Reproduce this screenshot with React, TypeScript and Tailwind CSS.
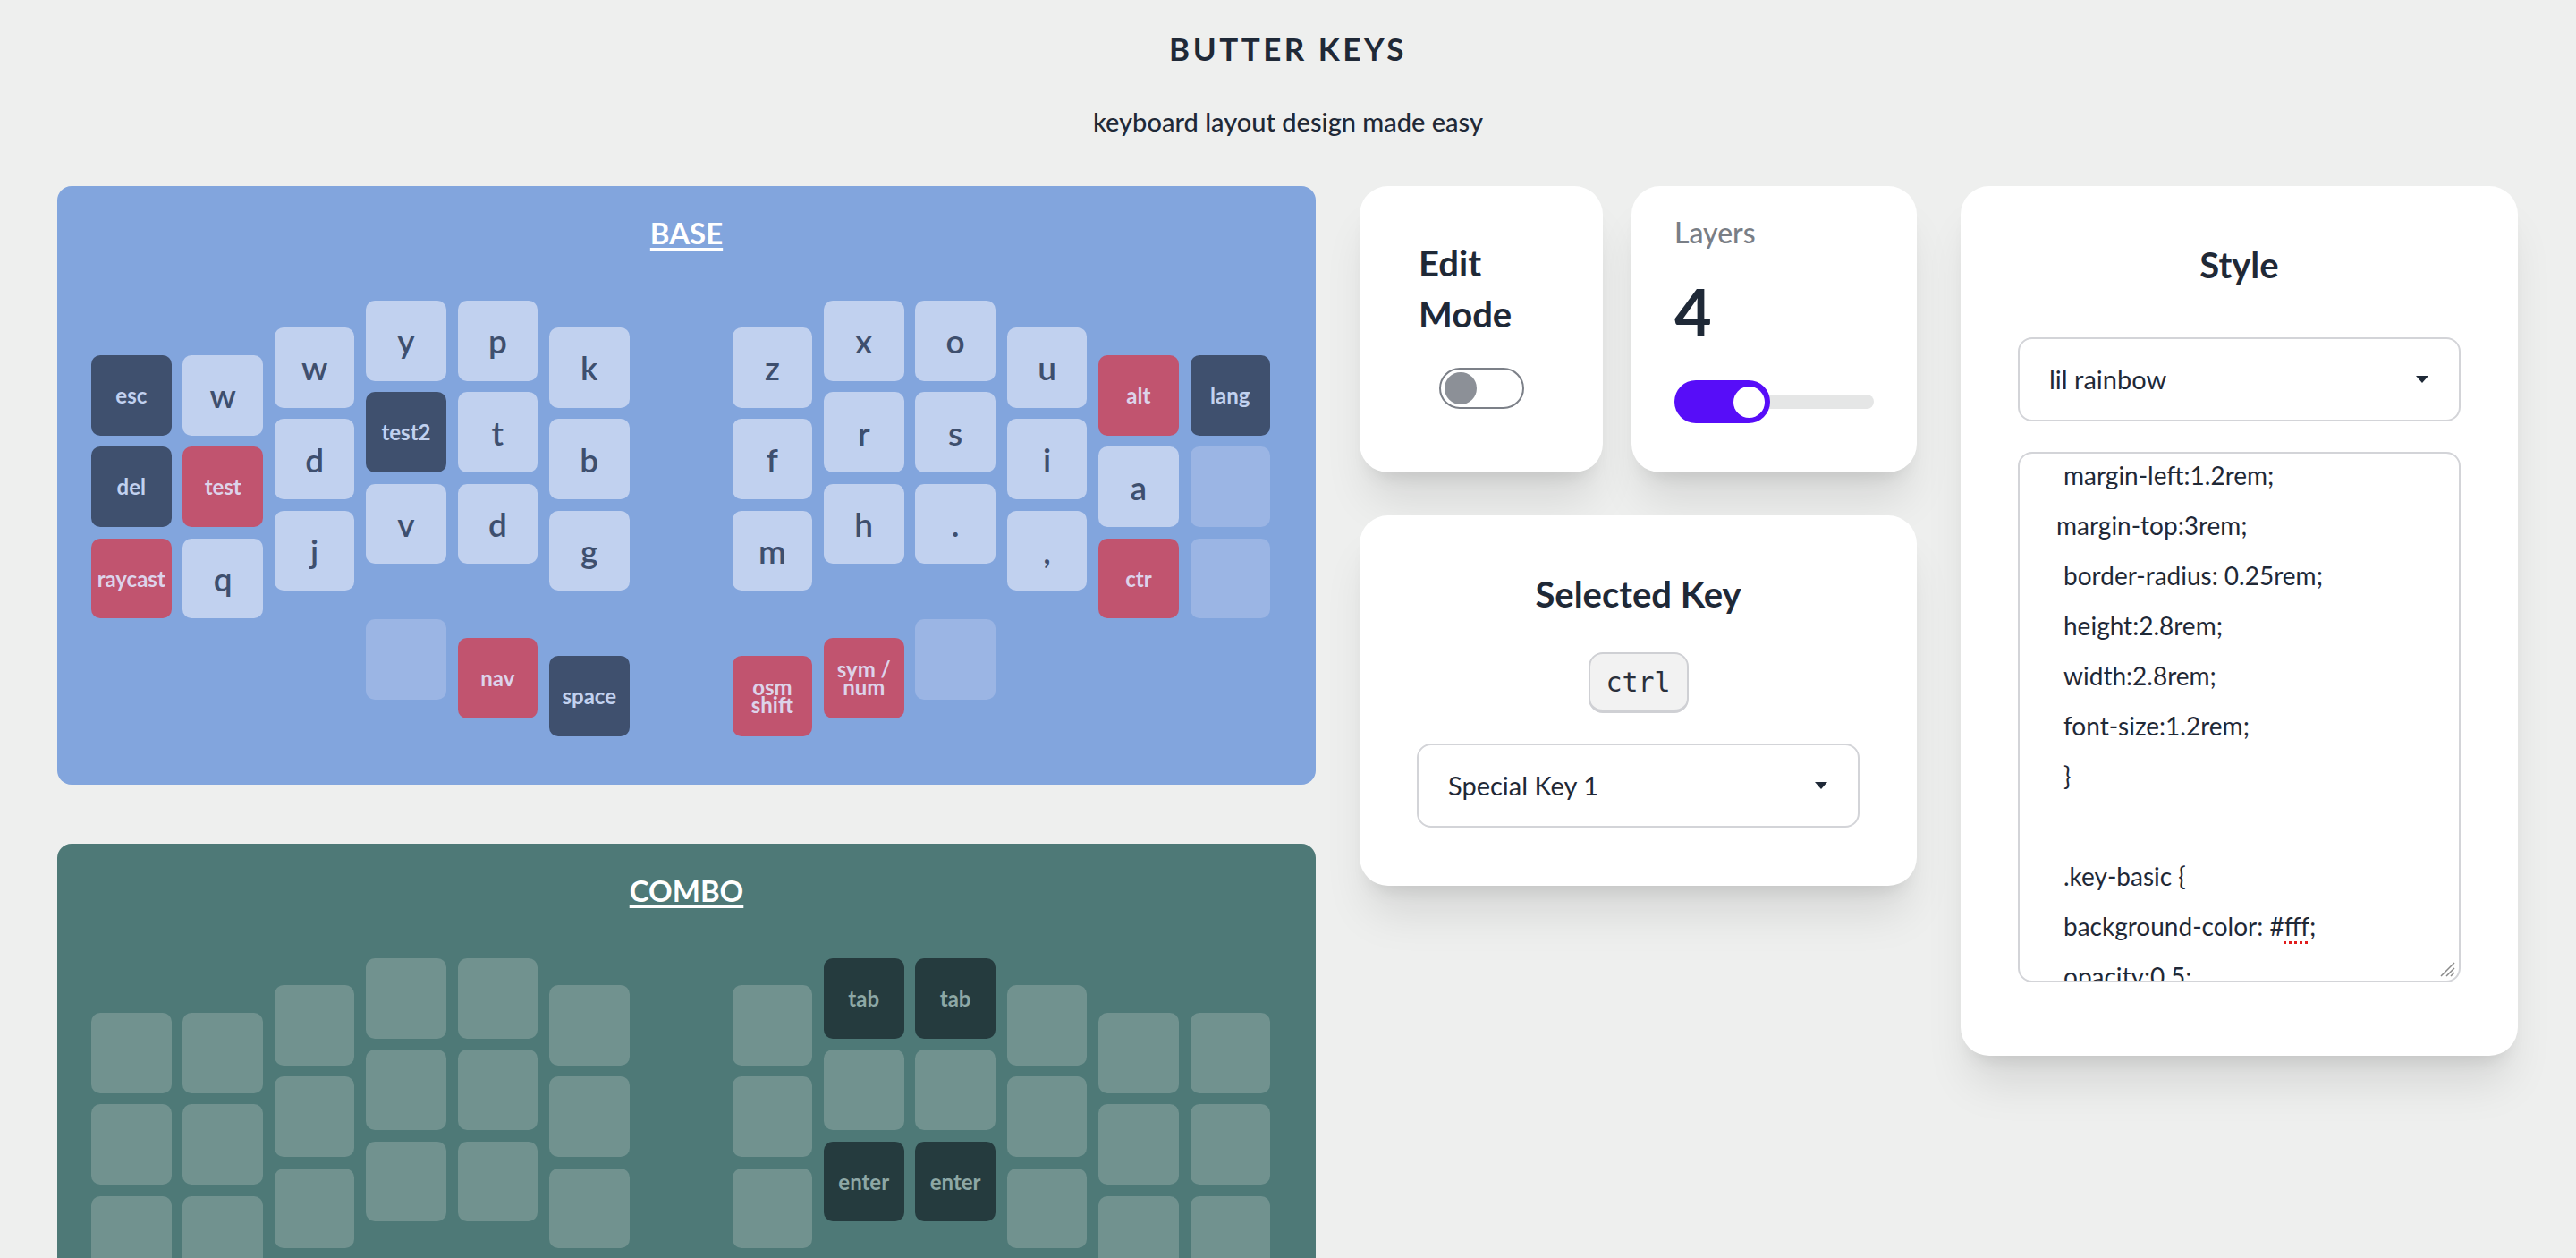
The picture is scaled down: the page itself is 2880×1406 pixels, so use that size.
import React from "react";

type Tone = "light" | "dark" | "red" | "blank";
type KeyDef = { label?: string; tone: Tone };
type Col = { offset: string; keys: KeyDef[] };
type Thumb = { offset: string; key: KeyDef } | null;

const baseTones: Record<Tone, string> = {
  light: "bg-[#c1d1ef] text-[#3e4f6e]",
  dark: "bg-[#3f506e] text-[#c1d1ef]",
  red: "bg-[#c1546f] text-[#ddd3ea]",
  blank: "bg-[#9bb5e4]",
};

const comboTones: Record<Tone, string> = {
  light: "bg-[#71928f] text-[#253b3e]",
  dark: "bg-[#253b3e] text-[#8ea8a5]",
  red: "bg-[#c1546f] text-[#ddd3ea]",
  blank: "bg-[#71928f]",
};

const k = (label: string, tone: Tone = "light"): KeyDef => ({ label, tone });
const blank: KeyDef = { tone: "blank" };

// base layer
const baseLeft: Col[] = [
  { offset: "mt-[61px]", keys: [k("esc", "dark"), k("del", "dark"), k("raycast", "red")] },
  { offset: "mt-[61px]", keys: [k("w"), k("test", "red"), k("q")] },
  { offset: "mt-[30px]", keys: [k("w"), k("d"), k("j")] },
  { offset: "mt-0", keys: [k("y"), k("test2", "dark"), k("v")] },
  { offset: "mt-0", keys: [k("p"), k("t"), k("d")] },
  { offset: "mt-[30px]", keys: [k("k"), k("b"), k("g")] },
];
const baseLeftThumbs: Thumb[] = [
  null,
  null,
  null,
  { offset: "mt-[1px]", key: blank },
  { offset: "mt-[22px]", key: k("nav", "red") },
  { offset: "mt-[42px]", key: k("space", "dark") },
];
const baseRight: Col[] = [
  { offset: "mt-[30px]", keys: [k("z"), k("f"), k("m")] },
  { offset: "mt-0", keys: [k("x"), k("r"), k("h")] },
  { offset: "mt-0", keys: [k("o"), k("s"), k(".")] },
  { offset: "mt-[30px]", keys: [k("u"), k("i"), k(",")] },
  { offset: "mt-[61px]", keys: [k("alt", "red"), k("a"), k("ctr", "red")] },
  { offset: "mt-[61px]", keys: [k("lang", "dark"), blank, blank] },
];
const baseRightThumbs: Thumb[] = [
  { offset: "mt-[42px]", key: k("osm shift", "red") },
  { offset: "mt-[22px]", key: k("sym / num", "red") },
  { offset: "mt-[1px]", key: blank },
  null,
  null,
  null,
];

// combo layer
const b3 = [blank, blank, blank];
const comboLeft: Col[] = baseLeft.map((c) => ({ offset: c.offset, keys: b3 }));
const comboLeftThumbs: Thumb[] = baseLeftThumbs.map((t) => (t ? { offset: t.offset, key: blank } : null));
const comboRight: Col[] = [
  { offset: "mt-[30px]", keys: b3 },
  { offset: "mt-0", keys: [k("tab", "dark"), blank, k("enter", "dark")] },
  { offset: "mt-0", keys: [k("tab", "dark"), blank, k("enter", "dark")] },
  { offset: "mt-[30px]", keys: b3 },
  { offset: "mt-[61px]", keys: b3 },
  { offset: "mt-[61px]", keys: b3 },
];
const comboRightThumbs: Thumb[] = baseRightThumbs.map((t) => (t ? { offset: t.offset, key: blank } : null));

function Key({ def, tones }: { def: KeyDef; tones: Record<Tone, string> }) {
  const single = (def.label ?? "").length === 1;
  return (
    <div
      className={`flex h-[89.6px] w-[89.6px] items-center justify-center rounded-[10px] text-center ${tones[def.tone]} ${
        single ? "text-[37px] font-semibold leading-none" : "px-[6px] text-[24px] font-bold leading-[20px]"
      }`}
    >
      {def.label}
    </div>
  );
}

function Half({ cols, thumbs, tones }: { cols: Col[]; thumbs: Thumb[]; tones: Record<Tone, string> }) {
  return (
    <div className="flex flex-col">
      <div className="flex items-start gap-[12.8px]">
        {cols.map((c, i) => (
          <div key={i} className={`flex flex-col gap-[12.8px] ${c.offset}`}>
            {c.keys.map((kd, j) => (
              <Key key={j} def={kd} tones={tones} />
            ))}
          </div>
        ))}
      </div>
      <div className="flex items-start gap-[12.8px]">
        {thumbs.map((t, i) =>
          t ? (
            <div key={i} className={t.offset}>
              <Key def={t.key} tones={tones} />
            </div>
          ) : (
            <div key={i} className="w-[89.6px]" />
          )
        )}
      </div>
    </div>
  );
}

function LayerPanel({
  title,
  bg,
  tones,
  left,
  leftThumbs,
  right,
  rightThumbs,
}: {
  title: string;
  bg: string;
  tones: Record<Tone, string>;
  left: Col[];
  leftThumbs: Thumb[];
  right: Col[];
  rightThumbs: Thumb[];
}) {
  return (
    <section className={`rounded-[16px] pt-[32px] pb-[54px] ${bg}`}>
      <h2 className="text-center text-[33px] font-bold leading-[40px] text-white underline decoration-[3px] underline-offset-[4px]">
        {title}
      </h2>
      <div className="mt-[56px] flex gap-[115px] pl-[38px]">
        <Half cols={left} thumbs={leftThumbs} tones={tones} />
        <Half cols={right} thumbs={rightThumbs} tones={tones} />
      </div>
    </section>
  );
}

const card =
  "rounded-[32px] bg-white shadow-[0_40px_50px_-10px_rgba(0,0,0,0.1),0_16px_20px_-12px_rgba(0,0,0,0.1)]";

function Select({ value }: { value: string }) {
  return (
    <div className="flex h-[94px] w-full items-center justify-between rounded-[16px] border-2 border-[#d3d4d8] bg-white pl-[33px] pr-[34px] text-[29px] text-[#1f2937]">
      <span>{value}</span>
      <svg width="14" height="8" viewBox="0 0 14 8">
        <path d="M0 0h14L7 8z" fill="#1f2937" />
      </svg>
    </div>
  );
}

const cssLines: { text: string; indent: boolean }[] = [
  { text: "margin-left:1.2rem;", indent: true },
  { text: "margin-top:3rem;", indent: false },
  { text: "border-radius: 0.25rem;", indent: true },
  { text: "height:2.8rem;", indent: true },
  { text: "width:2.8rem;", indent: true },
  { text: "font-size:1.2rem;", indent: true },
  { text: "}", indent: true },
  { text: "", indent: true },
  { text: ".key-basic {", indent: true },
  { text: "background-color: #fff;", indent: true },
  { text: "opacity:0.5;", indent: true },
];

export default function App() {
  return (
    <div className="min-h-screen bg-[#eeefee] pb-[80px] font-['Lato','Noto_Sans',sans-serif] text-[#1f2937]">
      <header className="pt-[30px] text-center">
        <h1 className="text-[35px] font-bold leading-[48px] tracking-[0.1em]">BUTTER KEYS</h1>
        <p className="mt-[38px] text-[29px] font-medium leading-[40px]">keyboard layout design made easy</p>
      </header>

      <main className="mt-[52px] flex items-start gap-[49px] px-[64px]">
        <div className="flex w-[1407px] shrink-0 flex-col gap-[66px]">
          <LayerPanel
            title="BASE"
            bg="bg-[#82a5dd]"
            tones={baseTones}
            left={baseLeft}
            leftThumbs={baseLeftThumbs}
            right={baseRight}
            rightThumbs={baseRightThumbs}
          />
          <LayerPanel
            title="COMBO"
            bg="bg-[#4e7977]"
            tones={comboTones}
            left={comboLeft}
            leftThumbs={comboLeftThumbs}
            right={comboRight}
            rightThumbs={comboRightThumbs}
          />
        </div>

        <div className="flex w-[623px] shrink-0 flex-col gap-[48px]">
          <div className="flex h-[320px] gap-[32px]">
            <div className={`${card} flex w-[272px] flex-col px-[66px] pt-[58px]`}>
              <h3 className="text-[40px] font-bold leading-[57px]">Edit Mode</h3>
              <div className="mt-[31px] flex h-[46px] w-[95px] items-center self-center rounded-full border-2 border-[#7c8088] pl-[4px]">
                <div className="h-[36px] w-[36px] rounded-full bg-[#8c9097]" />
              </div>
            </div>
            <div className={`${card} flex flex-1 flex-col px-[48px] pt-[34px]`}>
              <div className="text-[32px] font-medium leading-[36px] text-[#797e86]">Layers</div>
              <div className="mt-[30px] text-[72px] font-bold leading-[80px]">4</div>
              <div className="relative mt-[37px] flex h-[48px] items-center">
                <div className="h-[16px] w-full rounded-full bg-[#e5e6e6]" />
                <div className="absolute top-0 left-0 flex h-[48px] w-[107px] items-center justify-end rounded-full bg-[#570df8] pr-[6px]">
                  <div className="h-[35px] w-[35px] rounded-full bg-white" />
                </div>
              </div>
            </div>
          </div>

          <div className={`${card} flex flex-col items-center px-[64px] pt-[64px] pb-[65px]`}>
            <h3 className="text-[40px] font-bold leading-[48px]">Selected Key</h3>
            <kbd className="mt-[41px] flex h-[68px] w-[112px] items-center justify-center rounded-[16px] border-2 border-b-4 border-[#cfd0d4] bg-[#f2f2f2] font-['DejaVu_Sans_Mono',monospace] text-[30px] text-[#2a303c]">
              ctrl
            </kbd>
            <div className="mt-[34px] w-full">
              <Select value="Special Key 1" />
            </div>
          </div>
        </div>

        <div className={`${card} flex w-[623px] shrink-0 flex-col px-[64px] pt-[64px] pb-[82px]`}>
          <h3 className="text-center text-[40px] font-bold leading-[48px]">Style</h3>
          <div className="mt-[57px]">
            <Select value="lil rainbow" />
          </div>
          <div className="relative mt-[34px] h-[593px] overflow-hidden rounded-[16px] border-2 border-[#d3d4d8] pl-[41px] text-[28px] leading-[56px] text-[#1f2937]">
            <div className="-mt-[4px]">
              {cssLines.map((l, i) => (
                <div key={i} className={`h-[56px] whitespace-pre ${l.indent ? "pl-[8px]" : ""}`}>
                  {l.text === "background-color: #fff;" ? (
                    <>
                      background-color: #
                      <span className="underline decoration-[#e11d1d] decoration-dotted decoration-[3px] underline-offset-[6px]">
                        fff
                      </span>
                      ;
                    </>
                  ) : (
                    l.text
                  )}
                </div>
              ))}
            </div>
            <svg className="absolute right-[4px] bottom-[4px]" width="22" height="22" viewBox="0 0 22 22">
              <path d="M21 6L6 21M21 12L12 21M21 17L17 21" stroke="#8a8a8a" strokeWidth="1.5" />
            </svg>
          </div>
        </div>
      </main>
    </div>
  );
}
